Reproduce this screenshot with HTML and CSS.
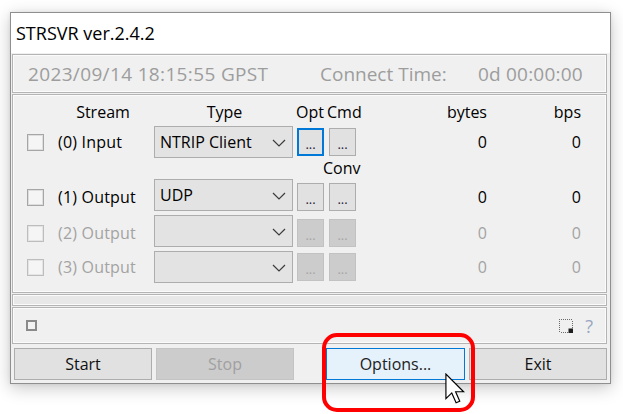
FILE: index.html
```html
<!DOCTYPE html>
<html>
<head>
<meta charset="utf-8">
<title>STRSVR</title>
<link rel="stylesheet" href="styles.css">
</head>
<body>
<div class="window">
  <div class="titlebar">STRSVR ver.2.4.2</div>
  <div class="client">
    <div class="panel status">
      <span class="st-time">2023/09/14 18:15:55 GPST</span>
      <span class="st-label">Connect Time:</span>
      <span class="st-val">0d 00:00:00</span>
    </div>

    <div class="panel streams">
      <div class="hd hd-stream">Stream</div>
      <div class="hd hd-type">Type</div>
      <div class="hd hd-opt">Opt</div>
      <div class="hd hd-cmd">Cmd</div>
      <div class="hd hd-bytes">bytes</div>
      <div class="hd hd-bps">bps</div>

      <span class="cb"></span>
      <span class="lbl">(0) Input</span>
      <div class="combo"><span class="combo-text">NTRIP Client</span><svg class="chev" width="14" height="8" viewBox="0 0 14 8"><path d="M1 1 L7 7 L13 1" fill="none" stroke="#3c3c3c" stroke-width="1.2"/></svg></div>
      <span class="dots focus">...</span>
      <span class="dots">...</span>
      <span class="num">0</span>
      <span class="num">0</span>

      <span class="conv">Conv</span>

      <span class="cb"></span>
      <span class="lbl">(1) Output</span>
      <div class="combo"><span class="combo-text">UDP</span><svg class="chev" width="14" height="8" viewBox="0 0 14 8"><path d="M1 1 L7 7 L13 1" fill="none" stroke="#3c3c3c" stroke-width="1.2"/></svg></div>
      <span class="dots">...</span>
      <span class="dots">...</span>
      <span class="num">0</span>
      <span class="num">0</span>

      <span class="cb dis"></span>
      <span class="lbl dis">(2) Output</span>
      <div class="combo"><span class="combo-text"></span><svg class="chev" width="14" height="8" viewBox="0 0 14 8"><path d="M1 1 L7 7 L13 1" fill="none" stroke="#3c3c3c" stroke-width="1.2"/></svg></div>
      <span class="dots dis">...</span>
      <span class="dots dis">...</span>
      <span class="num dis">0</span>
      <span class="num dis">0</span>

      <span class="cb dis"></span>
      <span class="lbl dis">(3) Output</span>
      <div class="combo"><span class="combo-text"></span><svg class="chev" width="14" height="8" viewBox="0 0 14 8"><path d="M1 1 L7 7 L13 1" fill="none" stroke="#3c3c3c" stroke-width="1.2"/></svg></div>
      <span class="dots dis">...</span>
      <span class="dots dis">...</span>
      <span class="num dis">0</span>
      <span class="num dis">0</span>
    </div>

    <div class="panel strip"></div>

    <div class="panel lower">
      <span class="mini-cb"></span>
      <svg class="trace-icon" width="16" height="16" viewBox="0 0 16 16">
        <path d="M1 1h1M3 1h1M5 1h1M7 1h1M9 1h1M11 1h1M13 1h1M1 3h1M1 5h1M1 7h1M1 9h1M1 11h1M1 13h1M14 3h1M14 5h1M14 7h1M14 9h1M3 14h1M5 14h1M7 14h1M9 14h1" stroke="#6a6a6a" stroke-width="1" transform="translate(0,0.5)"/>
        <rect x="10.5" y="10.5" width="4.5" height="4.5" fill="#1e1e1e"/>
      </svg>
      <span class="help">?</span>
    </div>

    <div class="buttons">
      <div class="btn">Start</div>
      <div class="btn disabled">Stop</div>
      <div class="btn hover push">Options...</div>
      <div class="btn">Exit</div>
    </div>
  </div>
</div>

<div class="annot"></div>
<svg class="cursor" width="20" height="31" viewBox="0 0 13 20">
  <path d="M0.6 0.6 L0.6 16.6 L4.4 12.9 L7.2 19.3 L9.6 18.3 L6.9 12.1 L12.1 12.1 Z" fill="#fff" stroke="#000" stroke-width="0.75" stroke-linejoin="miter"/>
</svg>
</body>
</html>
```

FILE: styles.css
```css
* {
  box-sizing: border-box;
  margin: 0;
  padding: 0;
}

html, body {
  width: 623px;
  height: 414px;
  overflow: hidden;
  background: #ffffff;
}

body {
  position: relative;
  font-family: "Open Sans", "Noto Sans", sans-serif;
  font-size: 16px;
  color: #000;
}

.window {
  width: 601px;
  height: 372px;
  margin: 12px 0 0 10px;
  border: 1px solid #8f8f8f;
  background: #f0f0f0;
  box-shadow: 0 4px 16px rgba(0, 0, 0, 0.22), 0 0 4px rgba(0, 0, 0, 0.08);
  display: flex;
  flex-direction: column;
}

.titlebar {
  flex: none;
  height: 40px;
  background: #ffffff;
  font-size: 18px;
  line-height: 40px;
  padding-left: 5px;
  color: #000;
}

.client {
  flex: 1;
  display: flex;
  flex-direction: column;
  padding: 1px 3px 0 1px;
}

.panel {
  border: 1px solid #b4b4b4;
  box-shadow: inset 0 0 0 1px #fbfbfb;
  background: #f0f0f0;
  flex: none;
}

/* status */
.status {
  height: 39px;
  display: flex;
  align-items: center;
  padding-left: 15px;
  font-size: 19px;
  color: #9d9d9d;
  white-space: nowrap;
}
.st-time { width: 292px; letter-spacing: 0.35px; }
.st-label { width: 158px; }
.st-val { letter-spacing: 0.2px; }

/* stream grid */
.streams {
  margin-top: 1px;
  height: 199px;
  display: grid;
  grid-template-columns: 31px 96px 139px 31px 32px 131px 94px;
  grid-template-rows: 24px 32px 21px 36px 36px 32px;
  padding: 7px 0 0 14px;
  align-items: start;
  white-space: nowrap;
}

.hd {
  line-height: 20px;
}
.hd-stream { grid-column: 2; text-align: center; padding-right: 6px; }
.hd-type { grid-column: 3; text-align: center; padding-left: 2px; }
.hd-opt { grid-column: 4; padding-left: 3px; }
.hd-cmd { grid-column: 5; padding-left: 3px; }
.hd-bytes { grid-column: 6; text-align: right; }
.hd-bps { grid-column: 7; text-align: right; }

.cb {
  grid-column: 1;
  width: 17px;
  height: 17px;
  align-self: center;
  border: 1px solid #a6a6a6;
  box-shadow: inset 0 0 0 1px #dedede;
  background: #f5f5f5;
}
.cb.dis {
  border-color: #bdbdbd;
  box-shadow: inset 0 0 0 1px #e4e4e4;
}

.lbl {
  grid-column: 2;
  align-self: center;
  line-height: 22px;
  letter-spacing: 0.2px;
}
.lbl.dis { color: #a3a3a3; }

.combo {
  grid-column: 3;
  height: 32px;
  border: 1px solid #adadad;
  background: #e3e3e3;
  display: flex;
  align-items: center;
  padding-left: 5px;
}
.combo-text { flex: 1; line-height: 22px; }
.chev { margin-right: 6px; margin-top: 1px; }

.dots {
  width: 27px;
  height: 28px;
  align-self: center;
  justify-self: end;
  border: 1px solid #adadad;
  background: #e1e1e1;
  font-size: 13px;
  line-height: 26px;
  text-align: center;
  color: #1d1d3a;
  padding-top: 2px;
}
.dots.focus {
  border: 2px solid #0078d7;
  line-height: 22px;
  padding-top: 3px;
}
.dots.dis {
  background: #cccccc;
  border-color: #c2c2c2;
  color: #a5a5a5;
}

.num {
  align-self: center;
  text-align: right;
  line-height: 22px;
}
.num.dis { color: #a3a3a3; }

.conv {
  grid-column: 5;
  align-self: end;
  margin-left: -1px;
  line-height: 20px;
  padding-bottom: 1px;
}

.strip {
  margin-top: 1px;
  height: 12px;
  background: #e8e8e8;
}

.lower {
  margin-top: 1px;
  height: 37px;
  display: flex;
  align-items: center;
  padding: 0 13px 0 13px;
}
.mini-cb {
  width: 11px;
  height: 11px;
  border: 2px solid #8a8a8a;
  background: #f3f3f3;
}
.trace-icon {
  margin-left: auto;
  margin-top: 1px;
}
.help {
  margin-left: 11px;
  font-size: 18px;
  color: #9aa6c0;
  line-height: 20px;
}

.buttons {
  margin-top: 4px;
  margin-left: 2px;
  display: flex;
  gap: 4px;
}
.btn {
  width: 138px;
  height: 32px;
  border: 1px solid #adadad;
  background: #e1e1e1;
  text-align: center;
  line-height: 30px;
  font-size: 16px;
  color: #111;
}
.btn.disabled {
  background: #cccccc;
  border-color: #c4c4c4;
  color: #a0a0a0;
}
.btn.hover {
  background: #e5f1fb;
  border-color: #0078d7;
  color: #222;
}
.btn.push {
  margin-left: auto;
  width: 139px;
}

.annot {
  position: absolute;
  left: 322px;
  top: 333px;
  width: 153px;
  height: 79px;
  border: 4.5px solid #ff0000;
  border-radius: 15px;
}

.cursor {
  position: absolute;
  left: 445px;
  top: 373px;
}
```
